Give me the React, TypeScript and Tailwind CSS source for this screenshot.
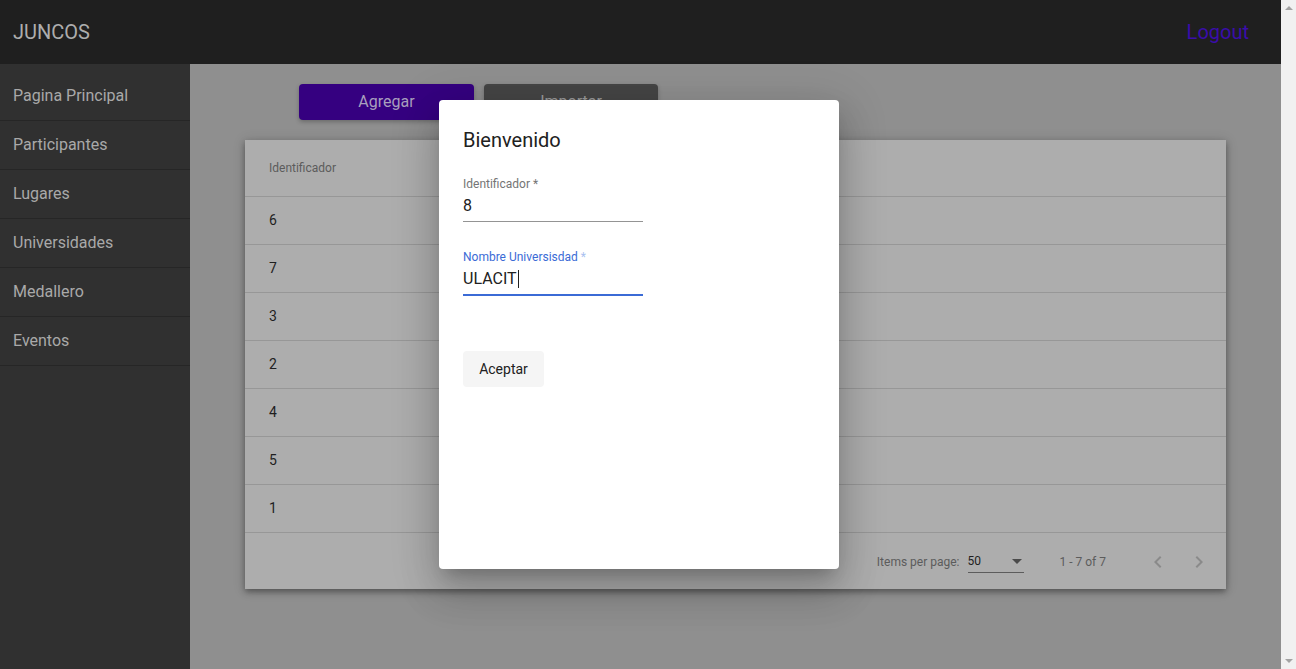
import React from "react";

const rows = ["6", "7", "3", "2", "4", "5", "1"];
const nav = ["Pagina Principal", "Participantes", "Lugares", "Universidades", "Medallero", "Eventos"];

export default function App() {
  return (
    <div className="flex h-[669px] w-[1296px] overflow-hidden" style={{ fontFamily: "Roboto, 'Liberation Sans', sans-serif" }}>
      <div className="relative flex h-full w-[1281px] flex-col">
        {/* header */}
        <header className="flex h-16 shrink-0 items-center justify-between bg-[#1f1f1f] pl-[13px] pr-[32px]">
          <span className="text-[20px] text-[#adadad]">JUNCOS</span>
          <span className="text-[20px] text-[#3a0dab]">Logout</span>
        </header>
        <div className="flex min-h-0 flex-1">
          {/* sidebar */}
          <aside className="w-[190px] shrink-0 bg-[#303030] pt-2">
            {nav.map((n) => (
              <div key={n} className="flex h-[49px] items-center border-b border-[#262626] pl-[13px] text-[16px] text-[#a9a9a9]">
                {n}
              </div>
            ))}
          </aside>
          {/* main */}
          <main className="flex-1 bg-[#8f8f8f] px-[55px] pt-5">
            <div className="ml-[54px] flex gap-[10px]">
              <button className="h-9 w-[175px] rounded-[4px] bg-[#350080] text-[16px] text-[#a89fbd] shadow-[0_2px_4px_rgba(0,0,0,0.25)]">Agregar</button>
              <button className="h-9 w-[174px] rounded-[4px] bg-[#454545] text-[16px] text-[#9a9a9a] shadow-[0_2px_4px_rgba(0,0,0,0.25)]">Importar</button>
            </div>
            <div className="mt-5 bg-[#adadad] shadow-[0_3px_6px_rgba(0,0,0,0.35),0_1px_12px_rgba(0,0,0,0.15)]">
              <div className="flex h-[57px] items-center border-b border-[#979797] pl-6 text-[12px] text-[#5c5c5c]">Identificador</div>
              {rows.map((r) => (
                <div key={r} className="flex h-12 items-center border-b border-[#979797] pl-6 text-[14px] text-[#1f1f1f]">
                  {r}
                </div>
              ))}
              <div className="flex h-[56px] items-center justify-end pr-[15px] pt-px text-[12px] text-[#5c5c5c]">
                <span className="mr-[8px]">Items per page:</span>
                <div className="flex h-[22px] w-[56px] items-center justify-between border-b border-[#5c5c5c]">
                  <span className="text-[#1f1f1f]">50</span>
                  <svg width="10" height="5" viewBox="0 0 10 5" className="mr-[2px]"><path d="M0 0l5 5 5-5z" fill="#4a4a4a" /></svg>
                </div>
                <span className="ml-[36px] mr-[40px]">1 - 7 of 7</span>
                <svg width="24" height="24" viewBox="0 0 24 24" className="mr-[17px]"><path d="M15.41 7.41L14 6l-6 6 6 6 1.41-1.41L10.83 12z" fill="#8a8a8a" /></svg>
                <svg width="24" height="24" viewBox="0 0 24 24"><path d="M10 6L8.59 7.41 13.17 12l-4.58 4.59L10 18l6-6z" fill="#8a8a8a" /></svg>
              </div>
            </div>
          </main>
        </div>
        {/* modal */}
        <div className="absolute inset-0 flex items-center justify-center pr-[3px]">
          <div className="flex h-[469px] w-[400px] flex-col rounded-[4px] bg-white px-6 pt-[21px] shadow-[0_11px_15px_-7px_rgba(0,0,0,0.2),0_24px_38px_3px_rgba(0,0,0,0.14),0_9px_46px_8px_rgba(0,0,0,0.12)]">
            <h2 className="mt-[3px] text-[20px] leading-8 text-[#212121]">Bienvenido</h2>
            <div className="mt-[21px] w-[180px]">
              <div className="text-[12px] leading-[14px] text-[#757575]">Identificador *</div>
              <div className="mt-[5px] text-[16px] leading-5 text-[#212121]">8</div>
              <div className="mt-[5px] h-px bg-[#949494]" />
            </div>
            <div className="mt-[28px] w-[180px]">
              <div className="text-[12px] leading-[14px] text-[#3b6bd6]">
                Nombre Universisdad <span className="text-[#a9c1f0]">*</span>
              </div>
              <div className="mt-[5px] flex items-center text-[16px] leading-5 text-[#212121]">
                ULACIT<span className="ml-px inline-block h-[18px] w-px bg-[#212121]" />
              </div>
              <div className="mt-[5px] h-[2px] bg-[#3b6bd6]" />
            </div>
            <button className="mt-[55px] h-9 w-[81px] rounded-[4px] bg-[#f5f5f5] text-[14px] text-[#212121]">Aceptar</button>
          </div>
        </div>
      </div>
      {/* scrollbar */}
      <div className="flex h-full w-[15px] flex-col items-center justify-between bg-[#f1f1f1] py-[5px]">
        <svg width="8" height="5" viewBox="0 0 8 5"><path d="M0 5l4-4 4 4z" fill="#a3a3a3" /></svg>
        <svg width="8" height="5" viewBox="0 0 8 5"><path d="M0 0l4 4 4-4z" fill="#a3a3a3" /></svg>
      </div>
    </div>
  );
}
